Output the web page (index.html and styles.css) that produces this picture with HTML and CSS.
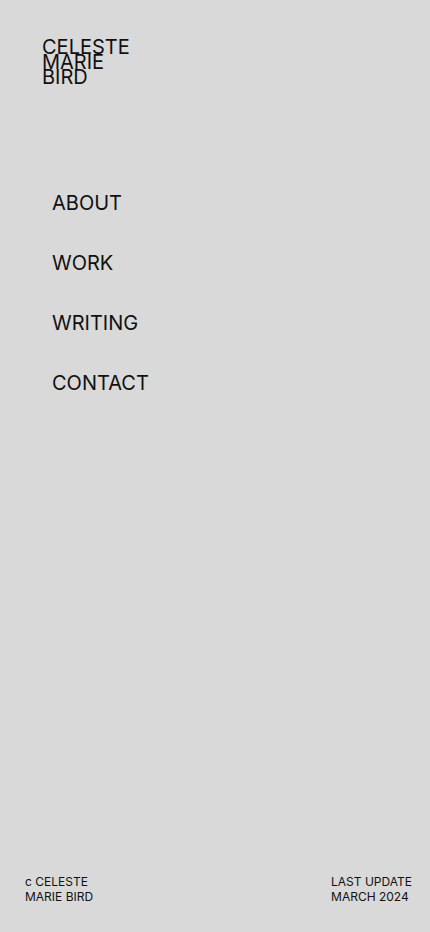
FILE: index.html
```html
<!DOCTYPE html>
<html>
<head>
<meta charset="utf-8">
<link rel="stylesheet" href="styles.css">
</head>
<body>
<div class="page">
  <header class="logo">CELESTE<br>MARIE<br>BIRD</header>
  <nav class="nav">
    <a href="#">ABOUT</a>
    <a href="#">WORK</a>
    <a href="#">WRITING</a>
    <a href="#">CONTACT</a>
  </nav>
  <footer class="footer">
    <div class="foot-left">c CELESTE<br>MARIE BIRD</div>
    <div class="foot-right">LAST UPDATE<br>MARCH 2024</div>
  </footer>
</div>
</body>
</html>
```
FILE: styles.css
```css
html, body {
  margin: 0;
  padding: 0;
  background: #d9d9d9;
}
body {
  font-family: Inter, "Liberation Sans", sans-serif;
  color: #111;
}
.page {
  height: 932px;
  display: flex;
  flex-direction: column;
  box-sizing: border-box;
}
.logo {
  font-size: 20px;
  line-height: 15px;
  padding: 40px 0 0 42px;
}
.nav {
  display: flex;
  flex-direction: column;
  gap: 36px;
  padding: 106px 0 0 52px;
}
.nav a {
  color: #111;
  text-decoration: none;
  font-size: 20px;
  line-height: 24px;
}
.footer {
  margin-top: auto;
  display: flex;
  justify-content: space-between;
  padding: 0 18px 28px 25px;
  font-size: 12px;
  line-height: 15px;
}
```
